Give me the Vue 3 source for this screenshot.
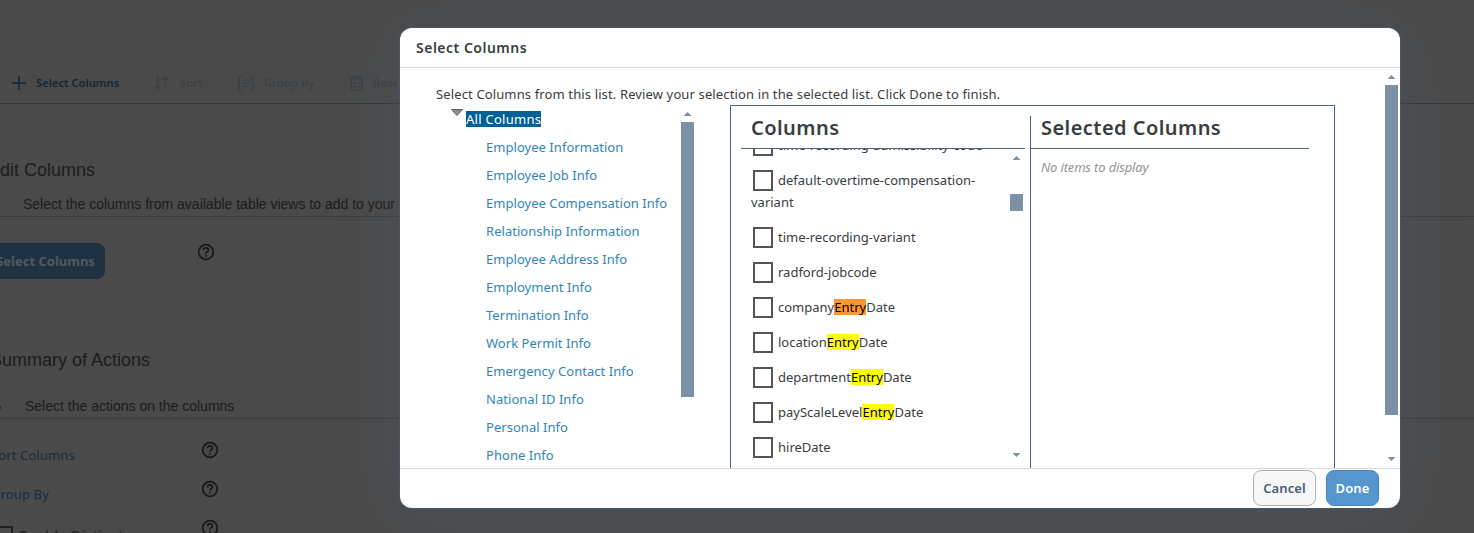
<script setup>
import { ref } from 'vue'

const tables = [
  'Employee Information',
  'Employee Job Info',
  'Employee Compensation Info',
  'Relationship Information',
  'Employee Address Info',
  'Employment Info',
  'Termination Info',
  'Work Permit Info',
  'Emergency Contact Info',
  'National ID Info',
  'Personal Info',
  'Phone Info'
]

const columns = ref([
  { before: 'time-recording-admissibility-code' },
  { before: 'default-overtime-compensation-variant' },
  { before: 'time-recording-variant' },
  { before: 'radford-jobcode' },
  { before: 'company', match: 'Entry', after: 'Date', active: true },
  { before: 'location', match: 'Entry', after: 'Date' },
  { before: 'department', match: 'Entry', after: 'Date' },
  { before: 'payScaleLevel', match: 'Entry', after: 'Date' },
  { before: 'hireDate' }
])

const actions = ['Sort Columns', 'Group By']
</script>

<template>
  <div class="screen">
    <div class="page">
      <div class="toolbar">
        <div class="tool tool-active">
          <svg width="14" height="14" viewBox="0 0 14 14"><path d="M7 0v14M0 7h14" /></svg>
          <span>Select Columns</span>
        </div>
        <div class="tool tool-sort">
          <svg width="16" height="14" viewBox="0 0 16 14"><path d="M3.500 0v13M.5 10l3 3 3-3M11.500 14V1M8.500 4l3-3 3 3" /></svg>
          <span>Sort</span>
        </div>
        <div class="tool tool-group">
          <svg width="16" height="15" viewBox="0 0 16 15"><path d="M4 1H2.500Q1 1 1 2.500v10Q1 14 2.500 14H4M12 1h1.500Q15 1 15 2.500v10q0 1.500-1.500 1.500H12M4 4.500h8M4 7.500h8M4 10.500h5" /></svg>
          <span>Group By</span>
        </div>
        <div class="tool tool-rearrange">
          <svg width="13" height="16" viewBox="0 0 13 16"><path d="M4 2.500H2.500Q1 2.500 1 4v9.500Q1 15 2.500 15h8q1.500 0 1.500-1.500V4q0-1.500-1.500-1.500H9M4 3.500V2q0-1 1-1h3q1 0 1 1v1.500zM3 8h3M7.500 8H10M3 11.500h3M7.500 11.500H10" /></svg>
          <span>Rearrange</span>
        </div>
      </div>

      <h2 class="edit-title">Edit Columns</h2>
      <p class="hint edit-hint">Select the columns from available table views to add to your query</p>
      <div class="edit-row">
        <button class="page-button">Select Columns</button>
        <svg class="help" width="18" height="18" viewBox="0 0 18 18"><circle cx="9" cy="9" r="7.300" /><path d="M6.600 7.200Q6.700 4.900 9 4.900t2.400 2.100Q11.400 8.200 10 8.900 9 9.400 9 10.800" /><path d="M9 12v1.700" /></svg>
      </div>

      <h2 class="summary-title">Summary of Actions</h2>
      <p class="hint summary-hint"><i></i>Select the actions on the columns</p>
      <div v-for="action in actions" :key="action" class="action">
        <span>{{ action }}</span>
        <svg class="help" width="18" height="18" viewBox="0 0 18 18"><circle cx="9" cy="9" r="7.300" /><path d="M6.600 7.200Q6.700 4.900 9 4.900t2.400 2.100Q11.400 8.200 10 8.900 9 9.400 9 10.800" /><path d="M9 12v1.700" /></svg>
      </div>
      <div class="action distinct">
        <i class="page-check"></i>
        <span>Enable Distinct</span>
        <svg class="help" width="18" height="18" viewBox="0 0 18 18"><circle cx="9" cy="9" r="7.300" /><path d="M6.600 7.200Q6.700 4.900 9 4.900t2.400 2.100Q11.400 8.200 10 8.900 9 9.400 9 10.800" /><path d="M9 12v1.700" /></svg>
      </div>
    </div>

    <div class="dialog">
      <header class="dialog-header">Select Columns</header>
      <div class="dialog-body">
        <div class="content">
          <p class="intro">Select Columns from this list. Review your selection in the selected list. Click Done to finish.</p>
          <div class="picker">
            <div class="tree">
              <div class="tree-list">
                <div class="root">
                  <svg width="12" height="7" viewBox="0 0 12 7"><path d="M.5.500h11L6 6.500z" /></svg>
                  <span>All Columns</span>
                </div>
                <a v-for="table in tables" :key="table">{{ table }}</a>
              </div>
              <div class="scrollbar tree-scroll">
                <i class="up"></i>
                <i class="thumb"></i>
              </div>
            </div>

            <div class="panel">
              <section class="available">
                <h3>Columns</h3>
                <div class="list-wrap">
                  <div class="list">
                    <div v-for="column in columns" :key="column.before" class="column">
                      <i class="check"></i>{{ column.before }}<mark v-if="column.match" :class="{ active: column.active }">{{ column.match }}</mark>{{ column.after }}
                    </div>
                  </div>
                  <div class="scrollbar list-scroll">
                    <i class="up"></i>
                    <i class="thumb"></i>
                    <i class="down"></i>
                  </div>
                </div>
              </section>
              <section class="selected">
                <h3>Selected Columns</h3>
                <p>No items to display</p>
              </section>
            </div>
          </div>
        </div>
        <div class="scrollbar body-scroll">
          <i class="up"></i>
          <i class="thumb"></i>
          <i class="down"></i>
        </div>
      </div>
      <footer class="dialog-footer">
        <button>Cancel</button>
        <button class="primary">Done</button>
      </footer>
    </div>
  </div>
</template>

<style>
body {
  margin: 0;
  overflow: hidden;
}
</style>

<style scoped>
* {
  box-sizing: border-box;
}

h2, h3, p {
  margin: 0;
}

button {
  font-family: inherit;
  padding: 0;
}

.screen {
  position: relative;
  width: 1474px;
  height: 533px;
  overflow: hidden;
  background: #4a4a4a;
  font-family: "Noto Sans", sans-serif;
  font-size: 13px;
  color: #3a3d40;
}

/* page behind the dialog */
.page {
  color: #1c1c1c;
  white-space: nowrap;
}

.toolbar {
  height: 104px;
  padding: 63px 0 0 12px;
  display: flex;
  border-bottom: 1px solid #35393c;
}

.tool {
  height: 40px;
  display: flex;
  align-items: center;
  gap: 10px;
  font-size: 11.200px;
  font-weight: 600;
  color: #3b4145;
}

.tool span {
  margin-top: -1px;
}

.tool svg {
  fill: none;
  stroke: currentColor;
  stroke-width: 1.500;
}

.tool-active {
  width: 142px;
  color: #112737;
}

.tool-sort {
  width: 84px;
}

.tool-group {
  width: 112px;
}

h2 {
  font-family: "Liberation Sans", Arial, sans-serif;
  font-size: 18px;
  font-weight: 400;
  line-height: 24px;
}

.edit-title {
  margin: 54px 0 0 -12px;
}

.hint {
  font-family: "Liberation Sans", Arial, sans-serif;
  font-size: 14px;
  height: 25px;
  line-height: 25px;
  border-bottom: 1px solid #3c3c3c;
}

.edit-hint {
  margin-top: 10px;
  padding-left: 23px;
}

.edit-row {
  display: flex;
  margin: 26px 0 0 -12px;
  height: 36px;
}

.page-button {
  width: 117px;
  padding-right: 2px;
  border: 1px solid #1b2f42;
  border-radius: 8px;
  background: #1f3243;
  color: #53595f;
  font-size: 13px;
  font-weight: 700;
}

.help {
  fill: none;
  stroke: #181818;
  stroke-width: 1.700;
}

.edit-row .help {
  margin-left: 92px;
}

.summary-title {
  margin: 69px 0 0 -10px;
}

.summary-hint {
  margin-top: 22px;
  display: flex;
}

.summary-hint i {
  width: 1px;
  height: 3px;
  margin: 12px 24px 0 0;
  background: #25292d;
}

.action {
  display: flex;
  height: 39px;
  margin-left: -9px;
  padding-top: 22px;
  align-items: flex-start;
  font-size: 13px;
  line-height: 29px;
  letter-spacing: .12px;
  color: #172c3c;
}

.action span {
  width: 210px;
}

.distinct {
  color: #222;
  font-size: 14.800px;
}

.page-check {
  width: 20px;
  height: 20px;
  margin: 7px 6px 0 2px;
  border: 2px solid #202020;
}

.distinct span {
  width: 182px;
  padding-top: 2px;
}

/* dialog */
.dialog {
  position: absolute;
  left: 400px;
  top: 28px;
  width: 1000px;
  height: 480px;
  display: flex;
  flex-direction: column;
  overflow: hidden;
  border-radius: 12px;
  background: #fff;
  box-shadow: 0 0 0 1px #485664, 0 10px 75px rgba(85, 107, 130, .28);
}

.dialog-header {
  height: 40px;
  padding-left: 16px;
  line-height: 39px;
  border-bottom: 1px solid #d9d9d9;
  font-size: 14px;
  font-weight: 600;
  letter-spacing: .5px;
}

.dialog-body {
  height: 400px;
  display: flex;
  overflow: hidden;
}

.content {
  width: 985px;
  padding-left: 36px;
}

.intro {
  height: 37px;
  padding-top: 15px;
  line-height: 22px;
  letter-spacing: .13px;
}

.picker {
  display: flex;
}

.tree {
  width: 294px;
  height: 363px;
  display: flex;
}

.tree-list {
  width: 245px;
}

.tree-list a {
  display: block;
  height: 28px;
  line-height: 28px;
  padding-left: 50px;
  letter-spacing: .04px;
  color: #2f86b8;
  white-space: nowrap;
}

.root {
  height: 28px;
  display: flex;
  align-items: flex-start;
  padding: 4px 0 0 15px;
}

.root svg {
  margin-right: 3px;
  fill: #8e8e8e;
  stroke: #606060;
}

.root span {
  height: 16px;
  margin-top: 2px;
  line-height: 16px;
  letter-spacing: .27px;
  background: #006196;
  color: #fff;
}

.panel {
  width: 605px;
  height: 380px;
  padding: 10px 0 0 10px;
  display: flex;
  border: 1px solid #4a6681;
}

h3 {
  height: 33px;
  padding-left: 10px;
  line-height: 24px;
  border-bottom: 1px solid #4a6681;
  font-size: 20px;
  font-weight: 600;
  letter-spacing: .45px;
}

.available {
  width: 284px;
}

.list-wrap {
  height: 315px;
  display: flex;
}

.list {
  width: 269px;
  height: 315px;
  padding-left: 10px;
  overflow: hidden;
}

.column {
  padding-bottom: 13px;
  line-height: 22px;
}

.column:first-child {
  margin-top: -15px;
  white-space: nowrap;
}

.check {
  display: inline-block;
  width: 20px;
  height: 21px;
  margin: -5px 5px -3px 2px;
  vertical-align: middle;
  border: 2px solid #555;
}

mark {
  display: inline-block;
  height: 16px;
  line-height: 16px;
  background: #ff0;
  color: #000;
}

mark.active {
  background: #ff9632;
}

.selected {
  width: 279px;
  margin-left: 5px;
  border-left: 1px solid #4a6681;
}

.selected p {
  padding: 7px 0 0 10px;
  line-height: 22px;
  letter-spacing: -.15px;
  font-style: italic;
  color: #949494;
}

/* scrollbars */
.scrollbar {
  width: 13px;
  display: flex;
  flex-direction: column;
  align-items: center;
}

.up,
.down {
  width: 8px;
  height: 4px;
  flex: none;
  background: #7b91a8;
}

.up {
  clip-path: polygon(50% 0, 100% 100%, 0 100%);
}

.down {
  clip-path: polygon(0 0, 100% 0, 50% 100%);
}

.thumb {
  width: 13px;
  flex: none;
  background: #7b91a8;
}

.body-scroll {
  padding-top: 7px;
}

.body-scroll .thumb {
  height: 330px;
  margin: 6px 0 42px;
}

.tree-scroll {
  padding-top: 7px;
}

.tree-scroll .thumb {
  height: 275px;
  margin-top: 6px;
}

.list-scroll {
  padding-top: 7px;
}

.list-scroll .thumb {
  height: 17px;
  margin: 34px 0 242px;
}

.dialog-footer {
  height: 40px;
  padding: 1px 21px 0 0;
  display: flex;
  justify-content: flex-end;
  gap: 10px;
  border-top: 1px solid #d9d9d9;
}

.dialog-footer button {
  width: 63px;
  height: 36px;
  border: 1px solid #b0b0b0;
  border-radius: 8px;
  background: #f7f7f7;
  color: #46607c;
  font-size: 13px;
  font-weight: 600;
  letter-spacing: .1px;
}

.dialog-footer .primary {
  width: 53px;
  border-color: #428ac8;
  background: #5496cd;
  color: #fff;
}
</style>
